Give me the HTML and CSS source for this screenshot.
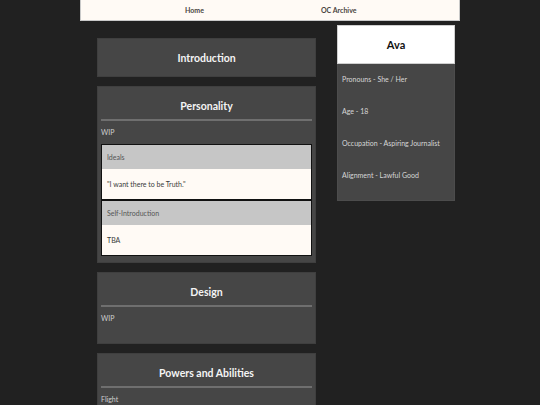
FILE: index.html
```html
<!DOCTYPE html>
<html lang="en">
<head>
    <meta charset="UTF-8">
    <meta name="viewport" content="width=device-width, initial-scale=1.0">
    <title>Ava</title>
    <link rel="stylesheet" href="styles.css">
</head>
<body>
    <nav class="topnav">
        <a href="#">Home</a>
        <a href="#">OC Archive</a>
    </nav>

    <div class="page">
        <div class="main">
            <section class="card">
                <h2>Introduction</h2>
            </section>

            <section class="card">
                <h2>Personality</h2>
                <hr>
                <p class="note note-tight">WIP</p>
                <div class="quote-box">
                    <div class="quote-head">Ideals</div>
                    <div class="quote-body">"I want there to be Truth."</div>
                </div>
                <div class="quote-box">
                    <div class="quote-head">Self-Introduction</div>
                    <div class="quote-body">TBA</div>
                </div>
            </section>

            <section class="card">
                <h2>Design</h2>
                <hr>
                <p class="note">WIP</p>
            </section>

            <section class="card">
                <h2>Powers and Abilities</h2>
                <hr>
                <p class="note">Flight</p>
            </section>
        </div>

        <aside class="profile">
            <div class="profile-name">Ava</div>
            <ul class="profile-info">
                <li>Pronouns - She / Her</li>
                <li>Age - 18</li>
                <li>Occupation - Aspiring Journalist</li>
                <li>Alignment - Lawful Good</li>
            </ul>
        </aside>
    </div>
</body>
</html>
```

FILE: styles.css
```css
body {
    margin: 0;
    background-color: #212121;
    font-family: "Lato", sans-serif;
    color: #dcdcdc;
}

.topnav {
    width: 378px;
    height: 20px;
    margin: 0 auto;
    background-color: #fffaf5;
    border: 1px solid #c9c9c9;
    border-top: none;
    display: flex;
    align-items: center;
}

.topnav a {
    font-size: 7px;
    font-weight: bold;
    color: #4a4440;
    text-decoration: none;
}

.topnav a:first-child {
    margin-left: 104px;
}

.topnav a + a {
    margin-left: 117px;
}

.page {
    width: 363px;
    margin: 0 auto;
    padding-left: 17px;
    display: flex;
    align-items: flex-start;
    gap: 21px;
}

.main {
    width: 219px;
    margin-top: 17px;
    display: flex;
    flex-direction: column;
    gap: 9px;
}

.card {
    background-color: #464646;
    border: 1px solid #3f3f3f;
    padding: 0 3px 6px;
}

.card h2 {
    margin: 0;
    padding: 12px 0 5px;
    font-size: 10.5px;
    line-height: 14px;
    font-weight: bold;
    color: #f4f4f4;
    text-align: center;
}

.card hr {
    margin: 1px 0 0;
    border: none;
    border-top: 2px solid #6f6f6f;
}

.note {
    margin: 6px 0 14px;
    font-size: 7px;
    line-height: 10px;
    color: #cfcfcf;
}

.note.note-tight {
    margin-bottom: 7px;
}

.quote-box {
    border: 1px solid #111;
}

.quote-head {
    background-color: #c6c6c6;
    height: 24px;
    line-height: 24px;
    padding-left: 5px;
    font-size: 7px;
    color: #555;
}

.quote-body {
    background-color: #fffaf5;
    height: 30px;
    line-height: 30px;
    padding-left: 5px;
    font-size: 7px;
    color: #3a3a3a;
}

.profile {
    width: 118px;
    margin-top: 4px;
}

.profile-name {
    background-color: #fff;
    border: 1px solid #cfcfcf;
    height: 37px;
    line-height: 37px;
    text-align: center;
    font-size: 11px;
    font-weight: bold;
    color: #111;
}

.profile-info {
    list-style: none;
    margin: 0;
    padding: 10px 4px 20px;
    background-color: #464646;
    border: 1px solid #4c4c4c;
    border-top: none;
    display: flex;
    flex-direction: column;
    gap: 22px;
}

.profile-info li {
    font-size: 7px;
    line-height: 10px;
    color: #d6d6d6;
}
```
